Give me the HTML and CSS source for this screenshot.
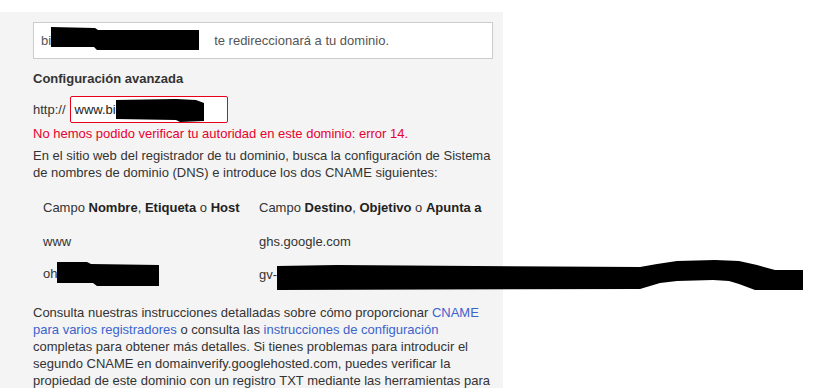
FILE: index.html
```html
<!DOCTYPE html>
<html lang="es">
<head>
  <meta charset="UTF-8">
  <title>Configuración avanzada</title>
  <link rel="stylesheet" href="styles.css">
</head>
<body>

  <div class="panel">
    <div class="redirect-box">
      <span>bi</span>
      <svg class="redact" width="148" height="23" viewBox="0 0 148 23"><path d="M0 0 L44 1 L47 3 L148 3 L148 23 L46 23 L43 20 L0 20 Z"/></svg>
      <span class="redirect-text">te redireccionará a tu dominio.</span>
    </div>

    <h3 class="section-title">Configuración avanzada</h3>

    <div class="url-row">
      <span>http://</span>
      <div class="url-field error">
        <span>www.bi</span>
        <svg class="redact" width="88" height="23" viewBox="0 0 88 23"><path d="M0 1 L60 0 L80 1 L88 4 L88 22 L64 23 L60 21 L0 20 Z"/></svg>
      </div>
    </div>
    <p class="error-msg">No hemos podido verificar tu autoridad en este dominio: error 14.</p>

    <p class="text">En el sitio web del registrador de tu dominio, busca la configuración de Sistema de nombres de dominio (DNS) e introduce los dos CNAME siguientes:</p>

    <table class="cname-table">
      <tr>
        <td class="col-name">Campo <b>Nombre</b>, <b>Etiqueta</b> o <b>Host</b></td>
        <td>Campo <b>Destino</b>, <b>Objetivo</b> o <b>Apunta a</b></td>
      </tr>
      <tr>
        <td class="col-name">www</td>
        <td>ghs.google.com</td>
      </tr>
      <tr>
        <td class="col-name">oh<svg class="redact" width="102" height="24" viewBox="0 0 102 24"><path d="M0 0 L30 0 L34 2 L102 3 L102 24 L40 24 L36 21 L0 21 Z"/></svg></td>
        <td>gv-<svg class="redact long" width="526" height="31" viewBox="0 0 526 31"><path d="M0 6 L60 5 L363 7 L380 4 L400 1 L438 0 L462 1 L480 5 L498 10 L526 10 L526 30 L478 30 L462 24 L452 21 L436 20 L400 21 L383 23 L363 29 L0 30 Z"/></svg></td>
      </tr>
    </table>

    <p class="text">Consulta nuestras instrucciones detalladas sobre cómo proporcionar <a href="#">CNAME para varios registradores</a> o consulta las <a href="#">instrucciones de configuración</a> completas para obtener más detalles. Si tienes problemas para introducir el segundo CNAME en domainverify.googlehosted.com, puedes verificar la propiedad de este dominio con un registro TXT mediante las herramientas para webmasters de Google.</p>
  </div>

</body>
</html>
```

FILE: styles.css
```css
body {
  margin: 0;
  background: #fff;
  font-family: "Liberation Sans", Arial, sans-serif;
  font-size: 13px;
  line-height: 17px;
  color: #333;
}

.panel {
  width: 503px;
  box-sizing: border-box;
  margin-top: 12px;
  padding: 10px 10px 20px 33px;
  background: #f4f4f4;
}

.redact {
  display: inline-block;
  fill: #000;
  flex-shrink: 0;
}

.redirect-box {
  height: 35px;
  display: flex;
  align-items: center;
  padding: 0 7px;
  background: #fff;
  border: 1px solid #ccc;
  color: #555;
}

.redirect-box .redact {
  margin-top: -4px;
}

.redirect-text {
  margin-left: 15px;
}

.section-title {
  margin: 11px 0 0;
  font-size: 13px;
  line-height: 17px;
  font-weight: bold;
  color: #333;
}

.url-row {
  display: flex;
  align-items: center;
  gap: 4px;
  margin-top: 9px;
}

.url-field {
  width: 158px;
  height: 27px;
  box-sizing: border-box;
  display: flex;
  align-items: center;
  padding: 0 4px;
  background: #fff;
  border: 1px solid #ccc;
  border-radius: 2px;
  color: #222;
}

.url-field.error {
  border-color: #e8001c;
}

.url-field .redact {
  margin-top: 2px;
}

.error-msg {
  margin: 2px 0 0;
  color: #e8002e;
}

.text {
  margin: 5px 0 0;
}

.text a {
  color: #3b63cc;
  text-decoration: none;
}

.cname-table {
  width: 460px;
  table-layout: fixed;
  border-collapse: collapse;
  margin-top: 9px;
  margin-bottom: 12px;
}

.cname-table td {
  height: 34px;
  padding: 0 0 0 10px;
  white-space: nowrap;
  vertical-align: middle;
}

.cname-table td.col-name {
  width: 206px;
}

.cname-table b {
  color: #222;
}

.cname-table td .redact {
  vertical-align: middle;
  margin-top: -2px;
}

.cname-table td .redact.long {
  margin-top: 0;
}

.cname-table + .text {
  margin-top: 0;
}
```
